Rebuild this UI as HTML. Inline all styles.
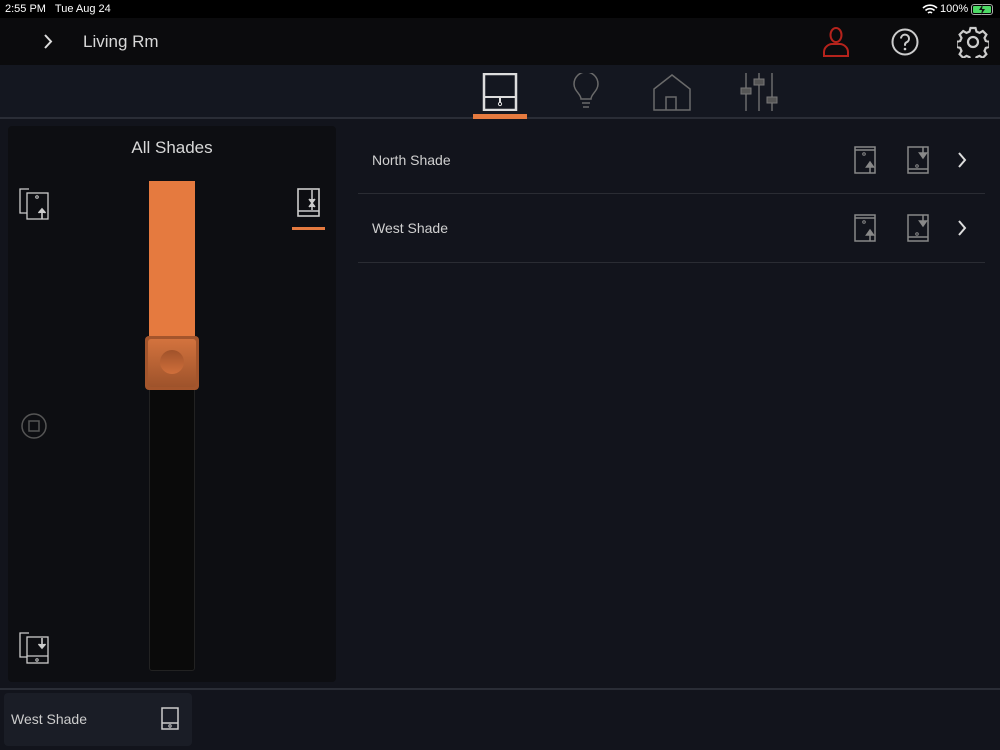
<!DOCTYPE html><html><head><style>
*{margin:0;padding:0;box-sizing:border-box}
body{width:1000px;height:750px;background:#12141c;font-family:"Liberation Sans",sans-serif;position:relative;overflow:hidden;color:#d0d0d0}
.a{position:absolute}
</style></head><body>
<div class="a" style="left:0;top:0;width:1000px;height:18px;background:#000;color:#fff;font-size:11px">
<span class="a" style="left:5px;top:3px">2:55 PM&nbsp;&nbsp; Tue Aug 24</span>
<span class="a" style="left:940px;top:3px">100%</span>
<svg class="a" style="left:922px;top:4px" width="16" height="11" viewBox="0 0 16 11"><path d="M1 4a10 10 0 0 1 14 0M3.5 6.5a6.5 6.5 0 0 1 9 0M6 9a3 3 0 0 1 4 0" stroke="#fff" stroke-width="1.6" fill="none"/></svg>
<div class="a" style="left:971px;top:4px;width:22px;height:11px;border:1px solid #aaa;border-radius:3px;padding:1px"><div style="background:#4cd964;height:100%;border-radius:1px"></div></div>
<svg class="a" style="left:977px;top:4px" width="10" height="11"><path d="M6 0L2 6h3l-1 5 4-6H5z" fill="#111"/></svg>
</div>
<div class="a" style="left:0;top:18px;width:1000px;height:47px;background:#0b0b0d">
<svg class="a" style="left:42px;top:15px" width="12" height="17"><path d="M3 2l6 6.5-6 6.5" stroke="#ddd" stroke-width="2" fill="none"/></svg>
<span class="a" style="left:83px;top:14px;font-size:17px;color:#d8d8d8">Living Rm</span>
<svg class="a" style="left:820px;top:7px" width="32" height="34" viewBox="0 0 32 34"><ellipse cx="16" cy="10" rx="5.5" ry="7" stroke="#b5231c" stroke-width="2" fill="none"/><path d="M4 31v-4c0-5 5-8 8-8h8c3 0 8 3 8 8v4z" stroke="#b5231c" stroke-width="2" fill="none"/></svg>
<svg class="a" style="left:890px;top:9px" width="30" height="30"><circle cx="15" cy="15" r="12.5" stroke="#ccc" stroke-width="2" fill="none"/><path d="M11 11.5a4 4 0 1 1 5.5 3.8c-1 .5-1.5 1.3-1.5 2.5v1" stroke="#ccc" stroke-width="2" fill="none"/><circle cx="15" cy="22" r="1.3" fill="#ccc"/></svg>
<svg class="a" style="left:957px;top:8px" width="32" height="32" viewBox="-16 -16 32 32"><g stroke="#ccc" stroke-width="2.2" fill="none"><path d="M-2.5 -14h5l1 3.6 3 1.3 3.3-1.9 3.6 3.6-1.9 3.3 1.3 3 3.6 1v5l-3.6 1-1.3 3 1.9 3.3-3.6 3.6-3.3-1.9-3 1.3-1 3.6h-5l-1-3.6-3-1.3-3.3 1.9-3.6-3.6 1.9-3.3-1.3-3-3.6-1v-5l3.6-1 1.3-3-1.9-3.3 3.6-3.6 3.3 1.9 3-1.3z"/><circle r="5"/></g></svg>
</div>
<div class="a" style="left:0;top:65px;width:1000px;height:54px;background:#141720;border-bottom:2px solid #2a2d36">
<svg class="a" style="left:482px;top:8px" width="36" height="38"><rect x="2" y="1" width="32" height="36" stroke="#ddd" stroke-width="2.5" fill="none"/><path d="M2 24h32M18 24v6" stroke="#ddd" stroke-width="2"/><circle cx="18" cy="31" r="1.6" stroke="#ddd" fill="none"/></svg>
<div class="a" style="left:473px;top:49px;width:54px;height:5px;background:#e57a3f"></div>
<svg class="a" style="left:572px;top:8px" width="28" height="38"><path d="M9 26c0-5-7-8-7-15a12 12 0 0 1 24 0c0 7-7 10-7 15z" stroke="#6a6a6a" stroke-width="1.5" fill="none"/><path d="M10 30h8M11 34h6" stroke="#6a6a6a" stroke-width="1.5"/></svg>
<svg class="a" style="left:652px;top:8px" width="40" height="38"><path d="M2 37V16L20 2l18 14v21zM14 37V24h10v13" stroke="#6a6a6a" stroke-width="1.5" fill="none"/></svg>
<svg class="a" style="left:738px;top:8px" width="42" height="38"><g stroke="#6a6a6a" stroke-width="1.5"><path d="M8 0v38M21 0v38M34 0v38"/></g><g fill="#555" stroke="#777"><rect x="3" y="15" width="10" height="6"/><rect x="16" y="6" width="10" height="6"/><rect x="29" y="24" width="10" height="6"/></g></svg>
</div>
<div class="a" style="left:8px;top:126px;width:328px;height:556px;background:#0d0e12;border-radius:4px">
<div class="a" style="left:0;top:12px;width:328px;text-align:center;font-size:17px;color:#d8d8d8">All Shades</div>
<svg class="a" style="left:11px;top:60px" width="32" height="34"><g stroke="#ccc" stroke-width="1.3" fill="none"><path d="M10 3H1v24h7"/><rect x="8" y="7" width="21" height="26"/></g><path d="M23 33v-9M19.5 27l3.5-4 3.5 4" stroke="#ccc" stroke-width="1.6" fill="#ccc"/><circle cx="18" cy="11" r="1.3" stroke="#ccc" fill="none"/></svg>
<svg class="a" style="left:289px;top:62px" width="24" height="30"><rect x="1" y="1" width="21" height="27" stroke="#ccc" stroke-width="1.6" fill="none"/><path d="M1 23h21M15 2v20M12 11l3 4 3-4M12 19l3-4 3 4" stroke="#ccc" stroke-width="1.5" fill="#ccc"/></svg>
<div class="a" style="left:284px;top:101px;width:33px;height:3px;background:#e57a3f"></div>
<svg class="a" style="left:12px;top:286px" width="28" height="28"><circle cx="14" cy="14" r="12" stroke="#555" stroke-width="1.5" fill="none"/><rect x="9" y="9" width="10" height="10" stroke="#555" stroke-width="1.5" fill="none"/></svg>
<svg class="a" style="left:11px;top:504px" width="32" height="34"><g stroke="#ccc" stroke-width="1.3" fill="none"><path d="M10 3H1v24h7"/><rect x="8" y="7" width="21" height="26"/><path d="M8 26h21"/></g><path d="M23 8v9M19.5 14l3.5 4 3.5-4" stroke="#ccc" stroke-width="1.6" fill="#ccc"/><circle cx="18" cy="30" r="1.2" stroke="#ccc" fill="none"/></svg>
<div class="a" style="left:141px;top:55px;width:46px;height:490px;background:#0a0a0a;border:1px solid #222;border-radius:3px"></div>
<div class="a" style="left:141px;top:55px;width:46px;height:160px;background:#e57a3f"></div>
<div class="a" style="left:137px;top:210px;width:54px;height:54px;background:#a4552c;border-radius:4px;padding:3px"><div style="width:100%;height:100%;background:linear-gradient(#d3733e,#9e532b);border-radius:3px;position:relative"><div class="a" style="left:12px;top:11px;width:24px;height:24px;border-radius:50%;background:linear-gradient(#a0522a,#d06f3b)"></div></div></div>
</div>
<div class="a" style="left:372px;top:152px;font-size:14px">North Shade</div>
<div class="a" style="left:358px;top:193px;width:627px;height:1px;background:#2a2c33"></div>
<div class="a" style="left:372px;top:220px;font-size:14px">West Shade</div>
<div class="a" style="left:358px;top:262px;width:627px;height:1px;background:#2a2c33"></div>
<svg width="0" height="0" style="position:absolute"><defs>
<g id="up"><rect x="1" y="1" width="20" height="26" stroke="#888" stroke-width="1.5" fill="none"/><path d="M1 4h20M16 27v-10M12.5 21l3.5-5 3.5 5z" stroke="#888" stroke-width="1.5" fill="#888"/><circle cx="10" cy="8" r="1.3" stroke="#888" fill="none"/></g>
<g id="dn"><rect x="1" y="1" width="20" height="26" stroke="#888" stroke-width="1.5" fill="none"/><path d="M1 23h20M16 1v10M12.5 7l3.5 5 3.5-5z" stroke="#888" stroke-width="1.5" fill="#888"/><circle cx="10" cy="20" r="1.3" stroke="#888" fill="none"/></g>
<path id="ch" d="M2 2l6 7-6 7" stroke="#ddd" stroke-width="2" fill="none"/></defs></svg>
<svg class="a" style="left:854px;top:146px" width="22" height="28"><use href="#up"/></svg>
<svg class="a" style="left:907px;top:146px" width="22" height="28"><use href="#dn"/></svg>
<svg class="a" style="left:957px;top:151px" width="12" height="18"><use href="#ch"/></svg>
<svg class="a" style="left:854px;top:214px" width="22" height="28"><use href="#up"/></svg>
<svg class="a" style="left:907px;top:214px" width="22" height="28"><use href="#dn"/></svg>
<svg class="a" style="left:957px;top:219px" width="12" height="18"><use href="#ch"/></svg>
<div class="a" style="left:0;top:688px;width:1000px;height:2px;background:#2a2d36"></div>
<div class="a" style="left:4px;top:693px;width:188px;height:53px;background:#1a1d26;border-radius:4px">
<span class="a" style="left:7px;top:18px;font-size:14px;color:#ccc">West Shade</span>
<svg class="a" style="left:157px;top:14px" width="18" height="23"><rect x="1" y="1" width="16" height="21" stroke="#ccc" stroke-width="1.5" fill="none"/><path d="M1 16h16" stroke="#ccc" stroke-width="1.5"/><circle cx="9" cy="19" r="1.2" stroke="#ccc" fill="none"/></svg>
</div>
</body></html>
